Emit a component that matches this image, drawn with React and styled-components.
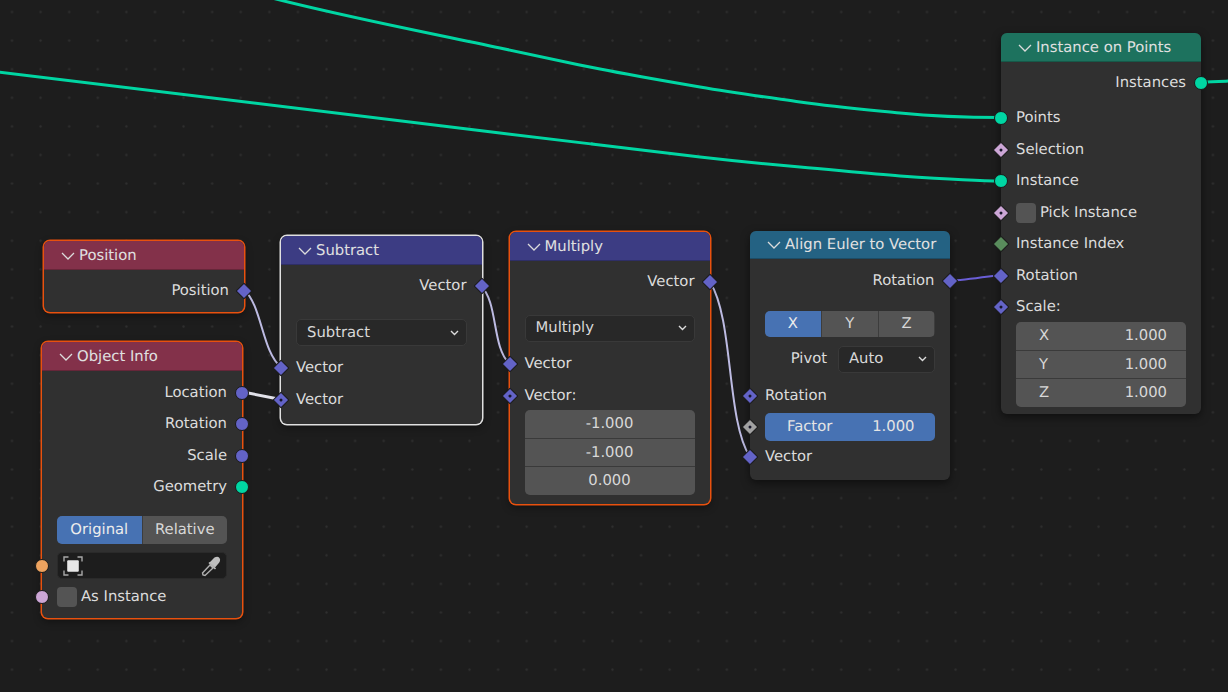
import React from "react";
import styled, { createGlobalStyle, css } from "styled-components";

const Global = createGlobalStyle`
  html, body { margin: 0; padding: 0; background: #1d1d1d; }
  body { font-family: "DejaVu Sans", sans-serif; text-rendering: geometricPrecision; }
`;

const Canvas = styled.div`
  position: relative;
  width: 1228px;
  height: 692px;
  overflow: hidden;
  background-color: #1d1d1d;
  background-image: radial-gradient(circle, #2f2f2f 0, #292929 1px, transparent 1.6px);
  background-size: 28.6px 28.6px;
  background-position: -2.3px -2.3px;
`;

const Wires = styled.svg`
  position: absolute;
  inset: 0;
  width: 100%;
  height: 100%;
`;

const Node = styled.section`
  position: absolute;
  left: ${(p) => p.$x}px;
  top: ${(p) => p.$y}px;
  width: ${(p) => p.$w}px;
  box-sizing: border-box;
  background: #303030;
  border-radius: 6px;
  color: #dcdcdc;
  font-size: 14.8px;
  line-height: 18px;
  box-shadow: ${(p) =>
    p.$ring ? `0 0 0 1.5px ${p.$ring}, 0 3px 8px rgba(0,0,0,.45)` : "0 3px 8px rgba(0,0,0,.5)"};
`;

const Header = styled.header`
  display: flex;
  align-items: center;
  gap: 4px;
  height: ${(p) => p.$h || 29}px;
  padding-left: 17px;
  background: ${(p) => p.$color};
  border-radius: 6px 6px 0 0;
  box-shadow: inset 0 -1px 0 rgba(0, 0, 0, 0.22);
  color: #e0e0e0;
  white-space: nowrap;
`;

const Body = styled.div`
  display: flex;
  flex-direction: column;
  padding: ${(p) => p.$top ?? 5.5}px 0 ${(p) => p.$bottom ?? 6}px;
`;

const Row = styled.div`
  position: relative;
  display: flex;
  align-items: center;
  justify-content: ${(p) => (p.$right ? "flex-end" : "flex-start")};
  gap: 4px;
  height: ${(p) => p.$h || 31.5}px;
  margin-top: ${(p) => p.$mt || 0}px;
  padding: 0 15px;
  white-space: nowrap;
`;

const socketShape = {
  circle: css`
    width: 12px;
    height: 12px;
    border-radius: 50%;
    transform: translateY(-50%) translateX(${(p) => (p.$out ? "50%" : "-50%")});
  `,
  diamond: css`
    width: 10px;
    height: 10px;
    border-radius: 1px;
    transform: translateY(-50%) translateX(${(p) => (p.$out ? "50%" : "-50%")}) rotate(45deg);
  `,
};

const Socket = styled.i`
  position: absolute;
  top: 50%;
  ${(p) => (p.$out ? "right: 0;" : "left: 0;")}
  display: block;
  background: ${(p) => p.$color};
  border: 0.75px solid #1a1a1a;
  ${(p) => socketShape[p.$shape || "diamond"]}
  &::after {
    content: "";
    display: ${(p) => (p.$dot ? "block" : "none")};
    position: absolute;
    left: 50%;
    top: 50%;
    width: 3px;
    height: 3px;
    border-radius: 50%;
    background: #17172a;
    transform: translate(-50%, -50%);
  }
`;

const ControlSlot = styled.div`
  display: flex;
  margin: ${(p) => p.$mt || 0}px 15px 0;
  height: ${(p) => p.$h || 27}px;
`;

const Dropdown = styled.div`
  flex: 1;
  display: flex;
  align-items: center;
  justify-content: space-between;
  box-sizing: border-box;
  padding: 0 7px 0 10px;
  background: #282828;
  border: 1px solid #393939;
  border-radius: 5px;
  color: #d8d8d8;
`;

const Segmented = styled.div`
  flex: 1;
  display: flex;
  gap: 1px;
  border-radius: 5px;
  overflow: hidden;
  background: #3d3d3d;
`;

const Segment = styled.div`
  flex: 1;
  display: flex;
  align-items: center;
  justify-content: center;
  background: ${(p) => (p.$active ? "#4772b3" : "#545454")};
  color: ${(p) => (p.$active ? "#ececec" : "#d8d8d8")};
`;

const PivotLabel = styled.span`
  width: 62px;
  margin-right: 11px;
  text-align: right;
  align-self: center;
`;

const Slider = styled.div`
  flex: 1;
  align-self: stretch;
  display: flex;
  justify-content: space-between;
  align-items: center;
  padding: 0 20px 0 22px;
  background: #4772b3;
  border-radius: 5px;
  color: #e4e4e4;
`;

const Stack = styled.div`
  display: flex;
  flex-direction: column;
  margin: ${(p) => p.$mt || 0}px 15px 0;
  border-radius: 5px;
  overflow: hidden;
  gap: 1px;
  background: #3a3a3a;
`;

const StackField = styled.div`
  display: flex;
  align-items: center;
  justify-content: ${(p) => (p.$split ? "space-between" : "center")};
  height: 27.7px;
  padding: ${(p) => (p.$split ? "0 19px 0 23px" : "0")};
  background: #545454;
  color: #d8d8d8;
`;

const PickerField = styled.div`
  flex: 1;
  height: 100%;
  display: flex;
  align-items: center;
  justify-content: space-between;
  box-sizing: border-box;
  padding: 0 5px;
  background: #1d1d1d;
  border: 1px solid #2a2a2a;
  border-radius: 5px;
`;

const Check = styled.span`
  flex: none;
  width: 20px;
  height: 20px;
  border-radius: 4px;
  background: #545454;
`;

const Chevron = () => (
  <svg width="14" height="8" viewBox="0 0 14 8" fill="none" style={{ flex: "none" }}>
    <path d="M1 1L7 7L13 1" stroke="#dcdcdc" strokeWidth="1.3" />
  </svg>
);

const SmallChevron = () => (
  <svg width="9" height="6" viewBox="0 0 9 6" fill="none">
    <path d="M1 1L4.5 4.5L8 1" stroke="#dcdcdc" strokeWidth="1.4" />
  </svg>
);

const ObjectIcon = () => (
  <svg width="20" height="20" viewBox="0 0 20 20" fill="none">
    <path
      d="M1 5.5V1H5.5M14.5 1H19V5.5M1 14.5V19H5.5M14.5 19H19V14.5"
      stroke="#a8a8a8"
      strokeWidth="1.4"
    />
    <rect x="4.2" y="4.2" width="11.6" height="11.6" rx="1" fill="#e8e8e8" />
  </svg>
);

const EyeDropper = () => (
  <svg width="20" height="22" viewBox="0 0 20 22" fill="none">
    <path d="M2 20L1.5 18L9 10L12 13L4 20.5Z" fill="none" stroke="#b0b0b0" strokeWidth="1.4" />
    <path d="M8.5 7.5L12 4C14 1.5 17 1 18.5 3C19.8 4.8 19 7 17 9L14 12.5Z" fill="#bebebe" />
    <path d="M8 7.5L14.5 14" stroke="#bebebe" strokeWidth="1.6" />
  </svg>
);

const VEC = "#6363c7";
const GEO = "#00d6a3";
const LAV = "#cca6d6";
const WIRE = "#00d6a3";
const SEL = "#bdbbe2";
const ORANGE = "#e8510e";

export default function App() {
  return (
    <Canvas>
      <Global />
      <Wires viewBox="0 0 1228 692" fill="none">
        <path
          d="M272 -2C350 18 430 33 500 48S570 63 600 69S665 81 700 87S765 97 800 102S870 110 900 113S975 117.5 1001 117.5"
          stroke={WIRE}
          strokeWidth="3"
        />
        <path
          d="M-2 72C170 92 340 114 500 133S565 141 600 145S665 153 700 157S765 164 800 167S870 174 900 176S975 181 1001 181"
          stroke={WIRE}
          strokeWidth="3"
        />
        <path d="M1201 82C1212 82 1220 81.5 1230 81" stroke={WIRE} strokeWidth="3" />
        <path d="M244 290C262 305 262 352 281 367" stroke={SEL} strokeWidth="2" />
        <path d="M243 392L281 399.5" stroke="#e2e2ea" strokeWidth="3" />
        <path d="M481 286C498 302 492 347 509 363" stroke={SEL} strokeWidth="2" />
        <path d="M710 282C734 320 726 420 750 457" stroke={SEL} strokeWidth="2" />
        <path d="M949 281C965 280 985 277 1001 275" stroke="#6a5ed6" strokeWidth="2" />
      </Wires>

      <Node $x={44} $y={241} $w={200} $ring={ORANGE}>
        <Header $color="#83314a"><Chevron />Position</Header>
        <Body $bottom={5}>
          <Row $right>Position<Socket $out $color={VEC} /></Row>
        </Body>
      </Node>

      <Node $x={42} $y={342.4} $w={200} $ring={ORANGE}>
        <Header $color="#83314a"><Chevron />Object Info</Header>
        <Body $bottom={5}>
          <Row $right>Location<Socket $out $shape="circle" $color={VEC} /></Row>
          <Row $right>Rotation<Socket $out $shape="circle" $color={VEC} /></Row>
          <Row $right>Scale<Socket $out $shape="circle" $color={VEC} /></Row>
          <Row $right>Geometry<Socket $out $shape="circle" $color={GEO} /></Row>
          <ControlSlot $mt={13} $h={28.5}>
            <Segmented>
              <Segment $active>Original</Segment>
              <Segment>Relative</Segment>
            </Segmented>
          </ControlSlot>
          <Row $mt={7.5} $h={27.5}>
            <PickerField><ObjectIcon /><EyeDropper /></PickerField>
            <Socket $shape="circle" $color="#eda35f" />
          </Row>
          <Row $mt={2}>
            <Check />As Instance
            <Socket $shape="circle" $color="#cca6d6" />
          </Row>
        </Body>
      </Node>

      <Node $x={281} $y={236} $w={200.5} $ring="#e0e0e0">
        <Header $color="#3c3c83"><Chevron />Subtract</Header>
        <Body $bottom={9}>
          <Row $right>Vector<Socket $out $color={VEC} /></Row>
          <ControlSlot $mt={17}>
            <Dropdown>Subtract<SmallChevron /></Dropdown>
          </ControlSlot>
          <Row $mt={6.25}>Vector<Socket $color={VEC} /></Row>
          <Row>Vector<Socket $dot $color={VEC} /></Row>
        </Body>
      </Node>

      <Node $x={509.5} $y={232} $w={200} $ring={ORANGE}>
        <Header $color="#3c3c83"><Chevron />Multiply</Header>
        <Body $bottom={8.5}>
          <Row $right>Vector<Socket $out $color={VEC} /></Row>
          <ControlSlot $mt={16.5}>
            <Dropdown>Multiply<SmallChevron /></Dropdown>
          </ControlSlot>
          <Row $mt={6.75}>Vector<Socket $color={VEC} /></Row>
          <Row>Vector:<Socket $dot $color={VEC} /></Row>
          <Stack $mt={-1.25}>
            <StackField>-1.000</StackField>
            <StackField>-1.000</StackField>
            <StackField>0.000</StackField>
          </Stack>
        </Body>
      </Node>

      <Node $x={750} $y={231} $w={199.5}>
        <Header $h={28} $color="#246283"><Chevron />Align Euler to Vector</Header>
        <Body $top={6.25} $bottom={7}>
          <Row $right>Rotation<Socket $out $color={VEC} /></Row>
          <ControlSlot $mt={14} $h={26.5}>
            <Segmented>
              <Segment $active>X</Segment>
              <Segment>Y</Segment>
              <Segment>Z</Segment>
            </Segmented>
          </ControlSlot>
          <ControlSlot $mt={8.5}>
            <PivotLabel>Pivot</PivotLabel>
            <Dropdown>Auto<SmallChevron /></Dropdown>
          </ControlSlot>
          <Row $mt={7.25}>Rotation<Socket $dot $color={VEC} /></Row>
          <Row $mt={1.5} $h={27.5}>
            <Slider><span>Factor</span><span>1.000</span></Slider>
            <Socket $dot $color="#a1a1a1" />
          </Row>
          <Row $mt={0.75}>Vector<Socket $color={VEC} /></Row>
        </Body>
      </Node>

      <Node $x={1001} $y={33} $w={200}>
        <Header $color="#1d725e"><Chevron />Instance on Points</Header>
        <Body $bottom={6.5}>
          <Row $right>Instances<Socket $out $shape="circle" $color={GEO} /></Row>
          <Row $mt={3.5}>Points<Socket $shape="circle" $color={GEO} /></Row>
          <Row>Selection<Socket $dot $color={LAV} /></Row>
          <Row>Instance<Socket $shape="circle" $color={GEO} /></Row>
          <Row><Check />Pick Instance<Socket $dot $color={LAV} /></Row>
          <Row>Instance Index<Socket $color="#598c5c" /></Row>
          <Row>Rotation<Socket $color={VEC} /></Row>
          <Row>Scale:<Socket $dot $color={VEC} /></Row>
          <Stack $mt={-1}>
            <StackField $split><span>X</span><span>1.000</span></StackField>
            <StackField $split><span>Y</span><span>1.000</span></StackField>
            <StackField $split><span>Z</span><span>1.000</span></StackField>
          </Stack>
        </Body>
      </Node>
    </Canvas>
  );
}
